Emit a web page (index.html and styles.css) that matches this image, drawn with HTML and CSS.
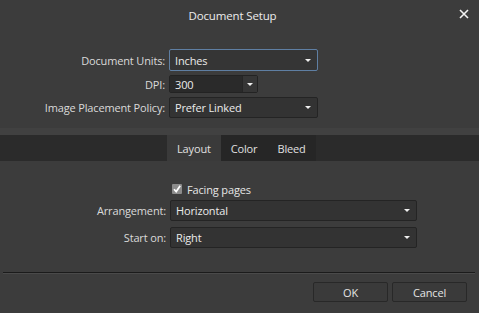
FILE: index.html
```html
<!DOCTYPE html>
<html>
<head>
<meta charset="utf-8">
<title>Document Setup</title>
<link rel="stylesheet" href="styles.css">
</head>
<body>
<div class="dialog">
	<div class="titlebar">
		<span class="title">Document Setup</span>
		<span class="close">
			<svg width="10" height="10" viewBox="0 0 10 10"><path d="M1 1L9 9M9 1L1 9" stroke="#f2f2f2" stroke-width="1.6"/></svg>
		</span>
	</div>

	<div class="general">
		<label class="label">Document Units:</label>
		<div class="select focus"><span>Inches</span><i class="arrow"></i></div>

		<label class="label">DPI:</label>
		<div class="combo">
			<span class="combo-value">300</span>
			<span class="combo-btn"><i class="arrow"></i></span>
		</div>

		<label class="label">Image Placement Policy:</label>
		<div class="select"><span>Prefer Linked</span><i class="arrow"></i></div>
	</div>

	<div class="tabstrip">
		<div class="tabs">
			<span class="tab active">Layout</span>
			<span class="tab">Color</span>
			<span class="tab">Bleed</span>
		</div>
	</div>

	<div class="layout">
		<span></span>
		<label class="check">
			<span class="box">
				<svg width="10" height="10" viewBox="0 0 10 10"><path d="M2 5.2L4.2 7.6L8.2 1.8" fill="none" stroke="#fff" stroke-width="1.7"/></svg>
			</span>
			Facing pages
		</label>

		<label class="label">Arrangement:</label>
		<div class="select"><span>Horizontal</span><i class="arrow"></i></div>

		<label class="label">Start on:</label>
		<div class="select"><span>Right</span><i class="arrow"></i></div>
	</div>

	<div class="sep"></div>

	<div class="footer">
		<button class="btn">OK</button>
		<button class="btn">Cancel</button>
	</div>
</div>
</body>
</html>
```

FILE: styles.css
```css
body {
	margin: 0;
	background: #3c3c3c;
	font-family: "Open Sans", "Noto Sans", sans-serif;
	font-size: 11px;
	letter-spacing: -0.15px;
	color: #e2e2e2;
}

.dialog {
	width: 479px;
	height: 313px;
	display: flex;
	flex-direction: column;
	background: #3c3c3c;
	overflow: hidden;
}

.titlebar {
	height: 30px;
	display: flex;
	align-items: center;
	justify-content: center;
	position: relative;
}

.title {
	font-size: 11.5px;
	color: #ececec;
	margin-right: 14px;
}

.close {
	position: absolute;
	right: 10px;
	top: 9px;
	width: 10px;
	height: 10px;
	display: flex;
}

.label {
	text-align: right;
	color: #dadada;
	white-space: nowrap;
}

.general {
	display: grid;
	grid-template-columns: 165px 149px;
	grid-template-rows: 22px 18px 21px;
	column-gap: 4px;
	row-gap: 4px;
	align-items: center;
	padding-top: 19px;
	box-sizing: border-box;
	border-bottom: 7px solid #414141;
	height: 105px;
}

.select {
	height: 100%;
	box-sizing: border-box;
	display: flex;
	align-items: center;
	justify-content: space-between;
	padding: 0 6px 0 5px;
	background: #333333;
	border: 1px solid #242424;
	border-radius: 2px;
	color: #ebebeb;
}

.select.focus {
	border-color: #5f7fa3;
	background: #353535;
}

.arrow {
	width: 0;
	height: 0;
	border-left: 3px solid transparent;
	border-right: 3px solid transparent;
	border-top: 3px solid #f0f0f0;
}

.combo {
	width: 89px;
	height: 100%;
	display: flex;
	box-sizing: border-box;
	border: 1px solid #232323;
	border-radius: 2px;
}

.combo-value {
	flex: 1;
	background: #2a2a2a;
	padding-left: 5px;
	display: flex;
	align-items: center;
	color: #ebebeb;
}

.combo-btn {
	width: 14px;
	background: #363636;
	border-left: 1px solid #262626;
	display: flex;
	align-items: center;
	justify-content: center;
}

.tabstrip {
	height: 26px;
	background: #2b2b2b;
	display: flex;
	padding-left: 167px;
}

.tabs {
	display: flex;
	background: #262626;
}

.tab {
	display: flex;
	align-items: center;
	padding: 0 10px;
	color: #e0e0e0;
}

.tab.active {
	background: #3a3a3a;
}

.layout {
	display: grid;
	grid-template-columns: 166px 247px;
	grid-template-rows: 10px 21px 21px;
	column-gap: 4px;
	row-gap: 6px;
	align-items: center;
	padding-top: 23px;
	height: 111px;
	box-sizing: border-box;
}

.check {
	display: flex;
	align-items: center;
	gap: 5px;
	margin-left: 2px;
	color: #e6e6e6;
}

.box {
	width: 10px;
	height: 10px;
	background: #8c8c8c;
	border-radius: 1px;
	display: flex;
}

.sep {
	height: 1px;
	margin: 0 4px 0 3px;
	background: #1b1b1b;
	border-bottom: 1px solid #4a4a4a;
}

.footer {
	display: flex;
	justify-content: flex-end;
	gap: 4px;
	padding: 8px 12px 0 0;
}

.btn {
	width: 75px;
	height: 20px;
	background: #3a3a3a;
	border: 1px solid #282828;
	border-radius: 2px;
	color: #e4e4e4;
	font-family: inherit;
	font-size: 11px;
	letter-spacing: -0.15px;
	padding: 0;
}
```
